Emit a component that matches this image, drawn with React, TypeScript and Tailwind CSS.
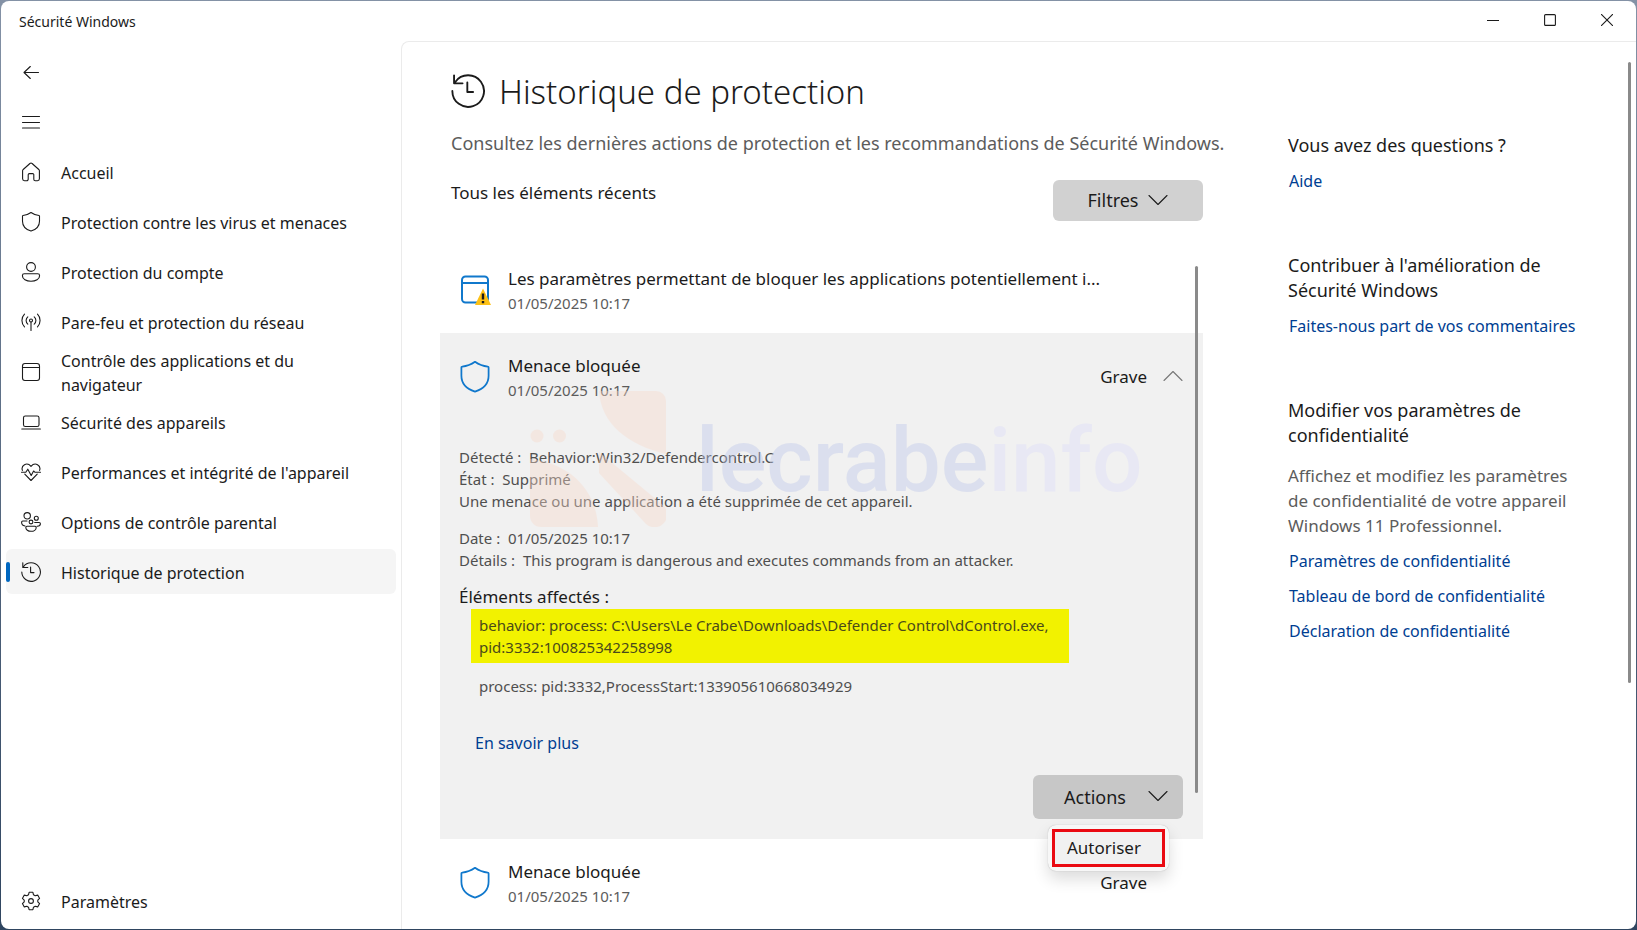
import { ReactNode, useState } from 'react'
import clsx from 'clsx'

type IconProps = { className?: string }

function Svg({
  className = 'size-5',
  box = 20,
  children,
}: IconProps & { box?: number; children: ReactNode }) {
  return (
    <svg
      viewBox={`0 0 ${box} ${box}`}
      className={clsx('shrink-0', className)}
      fill="none"
      stroke="currentColor"
      strokeWidth="1.1"
      strokeLinecap="round"
      strokeLinejoin="round"
      aria-hidden="true"
    >
      {children}
    </svg>
  )
}

const BackIcon = () => (
  <Svg>
    <path d="M17.5 10.5H3M9.3 4.5 3 10.5l6.3 6" />
  </Svg>
)

const MenuIcon = () => (
  <Svg>
    <path d="M1.5 4.5h17M1.5 10.5h17M1.5 16h17" />
  </Svg>
)

const HomeIcon = () => (
  <Svg>
    <path d="M8.9 1.5a1.7 1.7 0 0 1 2.2 0l6.7 6c.4.3.6.8.6 1.3v8a1.9 1.9 0 0 1-1.9 1.9h-2.2a1.5 1.5 0 0 1-1.5-1.5v-4.400a1.200 1.200 0 0 0-1.200-1.200H8.400a1.200 1.200 0 0 0-1.200 1.200v4.400a1.500 1.500 0 0 1-1.500 1.500H3.500a1.900 1.900 0 0 1-1.900-1.900v-8c0-.5.2-1 .6-1.300z" />
  </Svg>
)

const ShieldIcon = ({ className }: IconProps) => (
  <Svg className={className}>
    <path d="M10 .5c2.400 1.700 5 2.700 8 3 .3 0 .5.200.5.500v5.200c0 4.800-2.800 8.100-8.500 9.900C4.300 17.300 1.500 14 1.500 9.200V4c0-.3.2-.5.5-.5 3-.3 5.600-1.300 8-3z" />
  </Svg>
)

const AccountIcon = () => (
  <Svg>
    <circle cx="10" cy="5" r="4.400" />
    <path d="M3.300 11.800h13.400c1.100 0 1.900.8 1.900 1.900 0 3.500-3.900 5.600-8.600 5.600s-8.600-2.100-8.600-5.600c0-1.100.8-1.900 1.900-1.900z" />
  </Svg>
)

const NetworkIcon = () => (
  <Svg>
    <circle cx="10" cy="8.500" r="1.500" />
    <path d="M10 10v8.500M6.800 12.200a4.900 4.900 0 0 1 0-7.400M13.200 12.200a4.900 4.900 0 0 0 0-7.400M3.500 14.800a9 9 0 0 1 0-12.600M16.500 14.800a9 9 0 0 0 0-12.600" />
  </Svg>
)

const AppIcon = ({ className }: IconProps) => (
  <Svg className={className}>
    <rect x="1.500" y="1.500" width="17" height="17" rx="2.500" />
    <path d="M1.500 5.500h17" />
  </Svg>
)

const LaptopIcon = () => (
  <Svg>
    <rect x="2.500" y="4" width="15.500" height="10.500" rx="1.800" />
    <path d="M.8 17h18.600" />
  </Svg>
)

const HeartIcon = () => (
  <Svg>
    <path d="M1.400 8.400C-.3 3.500 5.800-.5 10 4.300c4.200-4.800 10.300-.8 8.600 4.100M3.800 12.200 10 18.500l6.200-6.300" />
    <path d="M.5 10.200h4.300l2-3 3.400 6.300 2.400-4.500 1.200 1.200h5.700" />
  </Svg>
)

const FamilyIcon = () => (
  <Svg>
    <circle cx="6.200" cy="3.800" r="3.200" />
    <circle cx="15.300" cy="6.200" r="2" />
    <circle cx="10" cy="10" r="1.900" />
    <path d="M6 14.200h8c.7 0 1.200.5 1.200 1.200 0 2.300-2.300 3.900-5.200 3.900s-5.200-1.600-5.200-3.900c0-.7.500-1.200 1.200-1.200zM6 9H1.800C1.100 9 .6 9.500.6 10.200c0 2.100 1.300 3.400 3.400 3.800M13.700 10.500h4.400c.8 0 1.300.5 1.300 1.200 0 1.600-1.200 2.400-3.200 2.500" />
  </Svg>
)

const HistoryIcon = ({ className }: IconProps) => (
  <Svg className={className}>
    <path d="M.8 10A9.300 9.300 0 1 0 2.500 4.700M1.800.8v4.700h5M9.600 5v5.600H13" />
  </Svg>
)

const GearIcon = () => (
  <Svg>
    <circle cx="10" cy="10" r="2.400" />
    <path d="M8.100 1.300h3.800l.6 2.500 1.700 1 2.500-.7 1.900 3.300-1.800 1.700v1.800l1.800 1.700-1.900 3.300-2.500-.7-1.700 1-.6 2.500H8.100l-.6-2.500-1.700-1-2.500.7-1.900-3.300 1.800-1.700V9.100L1.400 7.400l1.900-3.300 2.500.7 1.700-1z" />
  </Svg>
)

const Chevron = ({ up, className }: IconProps & { up?: boolean }) => (
  <Svg className={clsx('size-5', className)}>
    <path d={up ? 'M1 13.500l9-9 9 9' : 'M1 4.500l9 9 9-9'} />
  </Svg>
)

const navItems = [
  { label: 'Accueil', icon: HomeIcon },
  { label: 'Protection contre les virus et menaces', icon: ShieldIcon },
  { label: 'Protection du compte', icon: AccountIcon },
  { label: 'Pare-feu et protection du réseau', icon: NetworkIcon },
  { label: 'Contrôle des applications et du navigateur', icon: AppIcon },
  { label: 'Sécurité des appareils', icon: LaptopIcon },
  { label: "Performances et intégrité de l'appareil", icon: HeartIcon },
  { label: 'Options de contrôle parental', icon: FamilyIcon },
  { label: 'Historique de protection', icon: HistoryIcon },
]

function NavButton({
  icon,
  label,
  selected,
  onClick,
}: {
  icon: ReactNode
  label: string
  selected?: boolean
  onClick?: () => void
}) {
  return (
    <button
      type="button"
      onClick={onClick}
      className={clsx(
        'relative flex h-[45px] w-full items-center gap-5 rounded-md pr-11 pl-[15px] text-left text-[16px] leading-6',
        selected && 'bg-[#f5f5f5]'
      )}
    >
      {selected && (
        <span className="absolute left-0 h-5 w-1 rounded-full bg-[#0067c0]" />
      )}
      {icon}
      <span className="pt-0.5">{label}</span>
    </button>
  )
}

function IconButton({ label, icon }: { label: string; icon: ReactNode }) {
  return (
    <button
      type="button"
      aria-label={label}
      className="flex h-[45px] w-[50px] items-center pl-[15px]"
    >
      {icon}
    </button>
  )
}

function TitleBar() {
  return (
    <header className="flex h-10 shrink-0 items-center justify-between">
      <span className="pl-[18px] text-[14px]">Sécurité Windows</span>
      <div className="flex h-[38px] self-start pr-px">
        <button
          type="button"
          aria-label="Réduire"
          className="grid w-[57px] place-items-center"
        >
          <Svg className="size-3" box={12}>
            <path d="M0 6.500h12" />
          </Svg>
        </button>
        <button
          type="button"
          aria-label="Agrandir"
          className="grid w-[57px] place-items-center"
        >
          <Svg className="size-3" box={12}>
            <rect x=".6" y=".6" width="10.800" height="10.800" rx="1" />
          </Svg>
        </button>
        <button
          type="button"
          aria-label="Fermer"
          className="grid w-[57px] place-items-center"
        >
          <Svg className="size-3" box={12}>
            <path d="M.3.3l11.400 11.400M11.700.3.300 11.700" />
          </Svg>
        </button>
      </div>
    </header>
  )
}

function EntryHeader({
  icon,
  title,
  severity,
  chevron,
}: {
  icon: ReactNode
  title: string
  severity?: string
  chevron?: boolean
}) {
  return (
    <div className="flex h-[87px] items-center pr-5 pl-[19px]">
      {icon}
      <div className="ml-[17px] min-w-0 flex-1">
        <div className="truncate text-[17px] leading-[26px]">{title}</div>
        <div className="text-[15px] leading-[22px] text-[#5c5c5c]">
          01/05/2025 10:17
        </div>
      </div>
      {severity && <span className="text-[17px] leading-6">{severity}</span>}
      <span className="ml-4 w-5">
        {chevron && <Chevron up className="text-[#777]" />}
      </span>
    </div>
  )
}

function WarningAppIcon() {
  return (
    <svg
      viewBox="0 0 32 32"
      className="size-8 shrink-0"
      fill="none"
      aria-hidden="true"
    >
      <rect
        x="3"
        y="2.500"
        width="26"
        height="26"
        rx="3.500"
        stroke="#1078cc"
        strokeWidth="2"
      />
      <path d="M3 9h26" stroke="#1078cc" strokeWidth="2" />
      <path d="M24 14.500 32 31H16z" fill="#fdc116" />
      <path d="M22.800 19.500h2.400v6h-2.400zM22.800 27h2.400v2.200h-2.400z" fill="#1b1b1b" />
    </svg>
  )
}

function Watermark() {
  return (
    <div className="pointer-events-none absolute top-[58px] left-[90px] flex opacity-40">
      <svg
        viewBox="0 0 136 136"
        className="size-[136px] shrink-0"
        fill="#f8dacb"
        aria-hidden="true"
      >
        <circle cx="7" cy="45" r="6.500" />
        <circle cx="29.500" cy="45" r="6.500" />
        <path d="M69 0h57a10 10 0 0 1 10 10v53C98 54 71 33 69 0z" />
        <path d="M0 68c38 4 66 29 68 68H11a11 11 0 0 1-11-11z" />
        <path d="M69 61l64 53a12 12 0 0 1-17 19L69 82z" />
      </svg>
      <span className="mt-[18px] ml-[30px] font-['Roboto',sans-serif] text-[89px] leading-[104px] font-medium text-[#bcc6ea]">
        lecrabe<span className="text-[#dcdcfa]">info</span>
      </span>
    </div>
  )
}

function DetailsText() {
  return (
    <div className="text-[15px] leading-[22px] text-[#4f4f4f]">
      <p className="whitespace-pre">Détecté :{'  '}Behavior:Win32/Defendercontrol.C</p>
      <p className="whitespace-pre">État :{'  '}Supprimé</p>
      <p>Une menace ou une application a été supprimée de cet appareil.</p>
      <p className="mt-[15px] whitespace-pre">Date :{'  '}01/05/2025 10:17</p>
      <p className="whitespace-pre">
        Détails :{'  '}This program is dangerous and executes commands from an
        attacker.
      </p>
      <h2 className="mt-[14px] text-[17px] leading-6 text-[#1b1b1b]">
        Éléments affectés :
      </h2>
      <p className="ml-3 w-[598px] bg-[#f2f200] px-2 py-[5px] text-[#4a4a1a]">
        behavior: process: C:\Users\Le Crabe\Downloads\Defender
        Control\dControl.exe,
        <br />
        pid:3332:100825342258998
      </p>
      <p className="mt-3 ml-5">process: pid:3332,ProcessStart:133905610668034929</p>
    </div>
  )
}

function Link({ children }: { children: ReactNode }) {
  return (
    <a href="#" className="block w-fit text-[16px] leading-[25px] text-[#003e92]">
      {children}
    </a>
  )
}

function HelpColumn() {
  return (
    <aside className="w-[310px] shrink-0 pt-[91px] text-[18px] leading-[25px]">
      <h2>Vous avez des questions ?</h2>
      <div className="mt-[11px] pl-px">
        <Link>Aide</Link>
      </div>
      <h2 className="mt-[59px] pr-8">
        Contribuer à l'amélioration de Sécurité Windows
      </h2>
      <div className="mt-[11px] pl-px">
        <Link>Faites-nous part de vos commentaires</Link>
      </div>
      <h2 className="mt-[59px] pr-8">
        Modifier vos paramètres de confidentialité
      </h2>
      <p className="mt-[15px] text-[17px] pr-3 text-[#5c5c5c]">
        Affichez et modifiez les paramètres de confidentialité de votre appareil
        Windows 11 Professionnel.
      </p>
      <div className="mt-[11px] grid gap-[10px] pl-px">
        <Link>Paramètres de confidentialité</Link>
        <Link>Tableau de bord de confidentialité</Link>
        <Link>Déclaration de confidentialité</Link>
      </div>
    </aside>
  )
}

export default function App() {
  const [selected, setSelected] = useState('Historique de protection')
  const [menuOpen, setMenuOpen] = useState(true)

  return (
    <div className="h-screen bg-linear-to-b from-[#8492a6] to-[#2f4560] p-px font-['Noto_Sans','Open_Sans',sans-serif] text-[#1b1b1b]">
      <div className="flex h-full flex-col overflow-hidden rounded-lg bg-white">
        <TitleBar />
        <div className="flex min-h-0 flex-1">
          <nav className="flex w-[400px] shrink-0 flex-col justify-between pt-2 pr-[5px] pb-[6px] pl-[5px]">
            <div className="grid gap-[5px]">
              <IconButton label="Précédent" icon={<BackIcon />} />
              <IconButton label="Menu" icon={<MenuIcon />} />
              {navItems.map(({ label, icon: Icon }) => (
                <NavButton
                  key={label}
                  label={label}
                  icon={<Icon />}
                  selected={label === selected}
                  onClick={() => setSelected(label)}
                />
              ))}
            </div>
            <NavButton label="Paramètres" icon={<GearIcon />} />
          </nav>

          <main className="relative flex min-w-0 flex-1 justify-between gap-[85px] overflow-hidden rounded-tl-lg border-t border-l border-[#ebebeb] pr-[38px] pl-[38px]">
            <div className="min-w-0 flex-1">
              <div className="pt-7 pl-[11px]">
                <h1 className="flex items-start gap-[14px] text-[33px] leading-[44px] font-light">
                  <HistoryIcon className="mt-1 size-[34px]" />
                  Historique de protection
                </h1>
                <p className="mt-[17px] text-[18px] leading-[25px] whitespace-nowrap text-[#5c5c5c]">
                  Consultez les dernières actions de protection et les
                  recommandations de Sécurité Windows.
                </p>
                <div className="mt-6 flex items-start justify-between">
                  <h2 className="text-[17px] leading-[25px]">
                    Tous les éléments récents
                  </h2>
                  <button
                    type="button"
                    className="flex h-[41px] w-[150px] items-center justify-center gap-[10px] rounded-md bg-[#d1d1d1] text-[18px]"
                  >
                    Filtres
                    <Chevron />
                  </button>
                </div>
              </div>

              <div className="relative mt-[25px]">
                <EntryHeader
                  icon={<WarningAppIcon />}
                  title="Les paramètres permettant de bloquer les applications potentiellement i..."
                />
                <section className="relative bg-[#f1f1f1]">
                  <EntryHeader
                    icon={<ShieldIcon className="size-8 text-[#1078cc]" />}
                    title="Menace bloquée"
                    severity="Grave"
                    chevron
                  />
                  <div className="pt-[26px] pr-5 pb-5 pl-[19px]">
                    <DetailsText />
                    <div className="mt-[34px] ml-4">
                      <Link>En savoir plus</Link>
                    </div>
                    <div className="relative mt-[19px] ml-auto w-[150px]">
                      <button
                        type="button"
                        onClick={() => setMenuOpen(!menuOpen)}
                        className="flex h-11 w-full items-center justify-between rounded-md bg-[#c7c7c7] pr-[15px] pl-[31px] text-[18px]"
                      >
                        Actions
                        <Chevron />
                      </button>
                      {menuOpen && (
                        <div className="absolute top-[50px] left-[15px] z-10 w-[121px] rounded-lg bg-[#f7f7f7] p-1 shadow-[0_8px_16px_rgba(0,0,0,0.14),0_0_1px_rgba(0,0,0,0.3)]">
                          <button
                            type="button"
                            className="h-[38px] w-full border-3 border-[#ea0a12] bg-[#f1f1f1] pl-3 text-left text-[17px]"
                          >
                            Autoriser
                          </button>
                        </div>
                      )}
                    </div>
                  </div>
                  <Watermark />
                </section>
                <EntryHeader
                  icon={<ShieldIcon className="size-8 text-[#1078cc]" />}
                  title="Menace bloquée"
                  severity="Grave"
                />
                <span className="absolute top-5 right-[5px] h-[527px] w-[3px] rounded-full bg-[#8a8a8a]" />
              </div>
            </div>
            <HelpColumn />
            <span className="absolute top-5 right-[5px] h-[621px] w-[3px] rounded-full bg-[#8a8a8a]" />
          </main>
        </div>
      </div>
    </div>
  )
}
